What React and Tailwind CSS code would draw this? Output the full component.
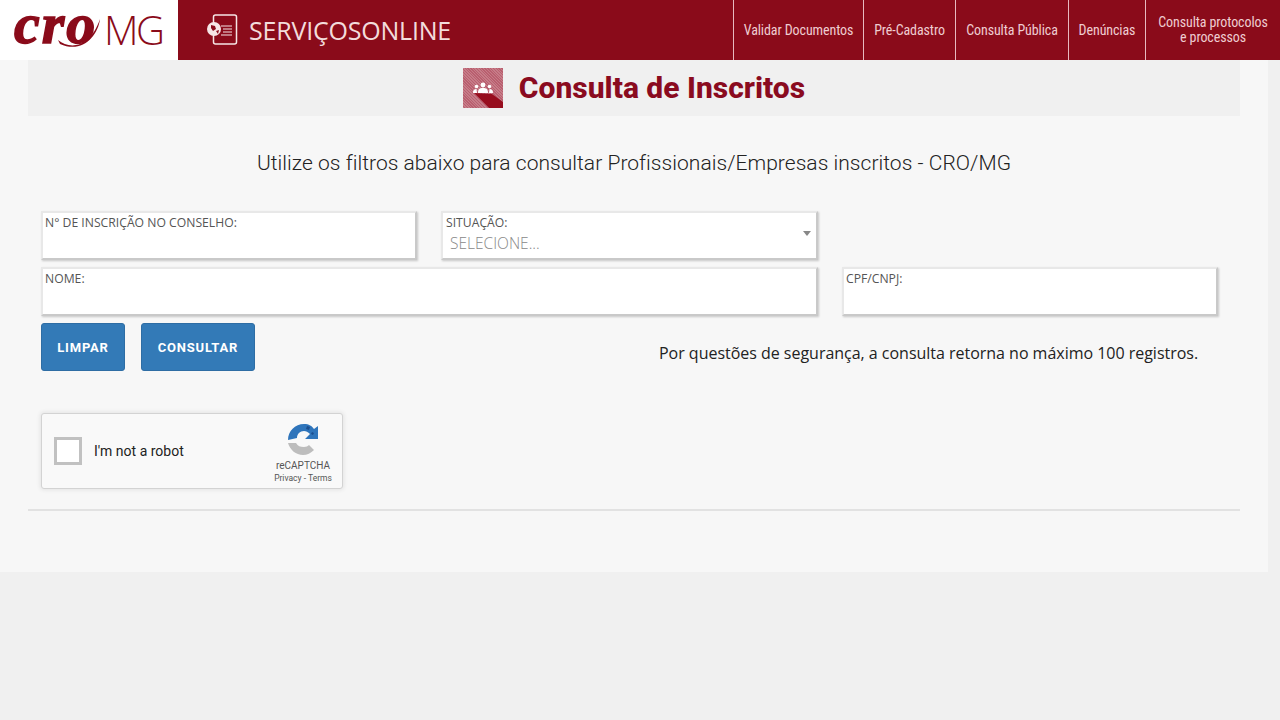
import React from 'react';

const navItems = [
  { label: 'Validar Documentos', width: 'w-[130px]' },
  { label: 'Pré-Cadastro', width: 'w-[92px]' },
  { label: 'Consulta Pública', width: 'w-[113px]' },
  { label: 'Denúncias', width: 'w-[77px]' },
];

function CroLogo() {
  return (
    <div className="relative flex h-[60px] w-[178px] shrink-0 items-center bg-white">
      {/* swash under the letters */}
      <svg width="60" height="40" viewBox="0 0 60 40" className="absolute left-[48px] top-[14px]">
        <path d="M10 26 C22 36 42 34 52 5 C50 22 34 40 12 30 Z" fill="#8a0b1a" />
      </svg>
      <span className="relative ml-[14px] mb-[12px] w-[88px] font-['Liberation_Serif'] text-[58px] font-bold italic leading-[60px] tracking-[2px] text-[#8a0b1a] [-webkit-text-stroke:1.5px_#8a0b1a]">cro</span>
      <span className="ml-[2px] font-['Open_Sans'] text-[40px] font-light leading-none tracking-[-2.5px] text-[#8a0b1a]">MG</span>
    </div>
  );
}

function ServicesIcon() {
  return (
    <svg width="32" height="32" viewBox="0 0 32 32" fill="none" className="shrink-0">
      <rect x="7.500" y="1" width="23" height="29" rx="2" stroke="#f6e6e6" strokeWidth="1.500" />
      <circle cx="8" cy="15" r="7" fill="#f6e6e6" />
      <path d="M5 11l4 1 1 3-3 2-2-3zM10 17l3-1-1 4z" fill="#8a0b1a" />
      <path d="M15 12h11M17 15h9M17 18h9M15 21h11" stroke="#f6e6e6" strokeWidth="1" />
    </svg>
  );
}

function TitleIcon() {
  return (
    <div className="h-10 w-10 shrink-0 bg-[repeating-linear-gradient(45deg,#c67c88_0,#c67c88_1px,#b95f6f_1px,#b95f6f_2px)]">
      <svg width="40" height="40" viewBox="0 0 40 40">
        <path d="M11 25 L29 26 L40 34 V40 H26 Z" fill="#970d1e" />
        <circle cx="20" cy="17" r="2.400" fill="#fff" />
        <circle cx="13.500" cy="18.500" r="1.800" fill="#fff" />
        <circle cx="26.500" cy="18.500" r="1.800" fill="#fff" />
        <path d="M15 25c0-4 1.500-5 5-5s5 1 5 5z" fill="#fff" />
        <path d="M10 25c0-3 1-4 3.500-4l.5 4zM30 25c0-3-1-4-3.500-4l-.5 4z" fill="#fff" />
      </svg>
    </div>
  );
}

function Field({ label, className }) {
  return (
    <div className={`h-[49px] border-2 border-[#e8e8e8] border-r-[#c9c9c9] border-b-[#c9c9c9] bg-white pl-[2px] shadow-[1px_1px_2px_rgba(0,0,0,0.2)] ${className}`}>
      <span className="block text-[12.2px] leading-[20px] text-[#555]">{label}</span>
    </div>
  );
}

function Captcha() {
  return (
    <div className="flex h-[76px] w-[302px] items-center rounded-[3px] border border-[#d3d3d3] bg-[#f9f9f9] pl-3 shadow-[0_0_4px_1px_rgba(0,0,0,0.08)]">
      <div className="h-7 w-7 border-[3px] border-[#c1c1c1] bg-white" />
      <span className="ml-3 font-['Roboto'] text-sm text-[#222]">I'm not a robot</span>
      <div className="ml-auto mr-[8px] flex w-[62px] flex-col items-center pt-[3px]">
        <svg width="32" height="32" viewBox="0 0 32 32" fill="none">
          <path d="M1 17C1 8 8 1 17 1c5 0 8 2 10 5l4-3v13H18l5-5c-2-2-4-3-6-3-4 0-7 3-7 7z" fill="#2f75bb" />
          <path d="M20 3l3 1-1 3-3-1zM25 9l2 1-1 2-2-1z" fill="#1c4f8f" />
          <path d="M1 20h8c2 3 4 4 8 4 2 0 4-1 5-2l5 5c-3 3-7 5-11 5C9 32 3 27 1 20z" fill="#bdbdbd" />
        </svg>
        <span className="mt-[4px] font-['Roboto'] text-[10px] leading-[14px] text-[#555]">reCAPTCHA</span>
        <span className="font-['Roboto'] text-[8.5px] leading-[10px] text-[#555]">Privacy - Terms</span>
      </div>
    </div>
  );
}

export default function App() {
  return (
    <div className="min-h-[720px] bg-[#f0f0f0] font-['Open_Sans',sans-serif]">
      <header className="flex h-[60px] bg-[#8a0b1a]">
        <CroLogo />
        <div className="flex items-center pl-[28px]">
          <ServicesIcon />
          <span className="ml-[11px] font-['Open_Sans'] text-[25px] leading-none tracking-[-0.2px] text-[#f3dcdc]">SERVIÇOSONLINE</span>
        </div>
        <nav className="ml-auto flex h-full">
          {navItems.map((item) => (
            <a key={item.label} className={`flex items-center justify-center border-l border-[#e7b9bf] font-['Roboto'] text-[14px] tracking-[-0.1px] text-[#efcdd1] [font-stretch:condensed] ${item.width}`}>
              {item.label}
            </a>
          ))}
          <a className="flex w-[135px] items-center justify-center border-l border-[#e7b9bf] text-center font-['Roboto'] text-[14px] leading-[15px] tracking-[-0.1px] text-[#efcdd1] [font-stretch:condensed]">
            Consulta protocolos<br />e processos
          </a>
        </nav>
      </header>

      <main className="h-[512px] w-[1268px] bg-[#f7f7f7] px-[28px]">
        <div className="flex h-[56px] items-center justify-center bg-[#f0f0f0]">
          <TitleIcon />
          <h1 className="ml-4 font-['Roboto'] text-[30px] font-extrabold leading-[40px] text-[#8a0b1f]">Consulta de Inscritos</h1>
        </div>
        <p className="mt-[32px] text-center font-['Roboto'] text-[21px] font-light leading-[30px] tracking-[0.04px] text-[#222]">
          Utilize os filtros abaixo para consultar Profissionais/Empresas inscritos - CRO/MG
        </p>

        <div className="mt-[33px] px-[13px]">
          <div className="flex gap-[24px]">
            <Field label="N° DE INSCRIÇÃO NO CONSELHO:" className="w-[376px]" />
            <div className="relative h-[49px] w-[377px] border-2 border-[#e8e8e8] border-r-[#c9c9c9] border-b-[#c9c9c9] bg-white pl-[3px] shadow-[1px_1px_2px_rgba(0,0,0,0.2)]">
              <span className="block text-[12.2px] leading-[20px] text-[#555]">SITUAÇÃO:</span>
              <span className="block pl-[4px] text-[15.500px] font-light leading-[20px] text-[#888]">SELECIONE...</span>
              <span className="absolute right-[5px] top-[18px] border-x-4 border-t-[5px] border-x-transparent border-t-[#888]" />
            </div>
          </div>
          <div className="mt-[7px] flex gap-[24px]">
            <Field label="NOME:" className="w-[777px]" />
            <Field label="CPF/CNPJ:" className="w-[376px]" />
          </div>
          <div className="mt-[7px] flex">
            <button className="h-[48px] w-[84px] rounded-[3px] border border-[#2e6da4] bg-[#337ab7] pt-px font-['Roboto'] text-[13px] font-bold tracking-[0.8px] text-white">LIMPAR</button>
            <button className="ml-4 h-[48px] w-[114px] rounded-[3px] border border-[#2e6da4] bg-[#337ab7] pt-px font-['Roboto'] text-[13px] font-bold tracking-[0.8px] text-white">CONSULTAR</button>
            <p className="ml-[404px] mt-[18px] text-base leading-[24px] tracking-[-0.02px] text-[#222]">Por questões de segurança, a consulta retorna no máximo 100 registros.</p>
          </div>
          <div className="mt-[42px]">
            <Captcha />
          </div>
        </div>
        <hr className="mt-[20px] border-t-2 border-[#e2e2e2]" />
      </main>
    </div>
  );
}
